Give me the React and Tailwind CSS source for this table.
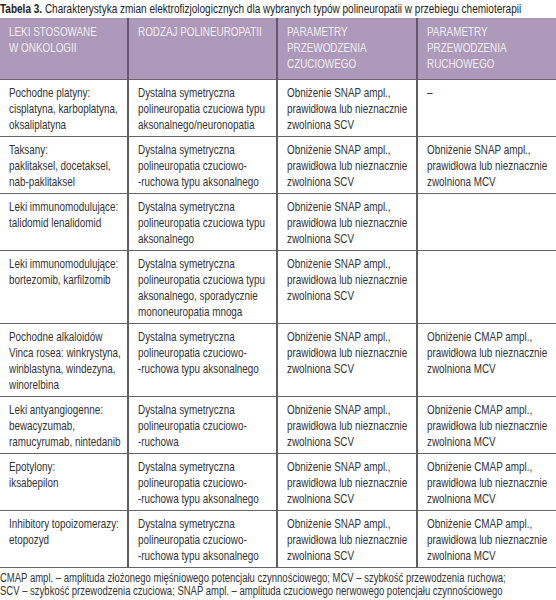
import React from "react";

const SNAP = ["Obniżenie SNAP ampl.,", "prawidłowa lub nieznacznie", "zwolniona SCV"];
const CMAP = ["Obniżenie CMAP ampl.,", "prawidłowa lub nieznacznie", "zwolniona MCV"];
const MCV = ["Obniżenie SNAP ampl.,", "prawidłowa lub nieznacznie", "zwolniona MCV"];
const CR_AKS = ["Dystalna symetryczna", "polineuropatia czuciowo-", "-ruchowa typu aksonalnego"];

const headers = [
  ["LEKI STOSOWANE", "W ONKOLOGII"],
  ["RODZAJ POLINEUROPATII"],
  ["PARAMETRY", "PRZEWODZENIA", "CZUCIOWEGO"],
  ["PARAMETRY", "PRZEWODZENIA", "RUCHOWEGO"],
];

const rows = [
  [
    ["Pochodne platyny:", "cisplatyna, karboplatyna,", "oksaliplatyna"],
    ["Dystalna symetryczna", "polineuropatia czuciowa typu", "aksonalnego/neuronopatia"],
    SNAP,
    ["–"],
  ],
  [["Taksany:", "paklitaksel, docetaksel,", "nab-paklitaksel"], CR_AKS, SNAP, MCV],
  [
    ["Leki immunomodulujące:", "talidomid lenalidomid"],
    ["Dystalna symetryczna", "polineuropatia czuciowa typu", "aksonalnego"],
    SNAP,
    [],
  ],
  [
    ["Leki immunomodulujące:", "bortezomib, karfilzomib"],
    ["Dystalna symetryczna", "polineuropatia czuciowa typu", "aksonalnego, sporadycznie", "mononeuropatia mnoga"],
    SNAP,
    [],
  ],
  [
    ["Pochodne alkaloidów", "Vinca rosea: winkrystyna,", "winblastyna, windezyna,", "winorelbina"],
    CR_AKS,
    SNAP,
    CMAP,
  ],
  [
    ["Leki antyangiogenne:", "bewacyzumab,", "ramucyrumab, nintedanib"],
    ["Dystalna symetryczna", "polineuropatia czuciowo-", "-ruchowa"],
    SNAP,
    CMAP,
  ],
  [["Epotylony:", "iksabepilon"], CR_AKS, SNAP, CMAP],
  [["Inhibitory topoizomerazy:", "etopozyd"], CR_AKS, SNAP, CMAP],
];

// narrow look: Liberation Sans squeezed horizontally
function Lines({ lines }) {
  return lines.map((l, i) => (
    <div key={i} className="whitespace-nowrap origin-left scale-x-[0.76]">
      {l}
    </div>
  ));
}

export default function App() {
  return (
    <div className="w-[556px] h-[600px] bg-white text-[#333] overflow-hidden font-['Liberation_Sans',Arial,sans-serif]">
      <div className="h-[18px] text-[13px] leading-[17px] text-[#222] whitespace-nowrap origin-left scale-x-[0.77]">
        <span className="font-bold">Tabela 3.</span> Charakterystyka zmian elektrofizjologicznych dla wybranych typów
        polineuropatii w przebiegu chemioterapii
      </div>

      <table className="table-fixed border-collapse w-[556px] text-[13px] leading-[16px]">
        <colgroup>
          <col className="w-[128px]" />
          <col className="w-[149px]" />
          <col className="w-[140px]" />
          <col className="w-[139px]" />
        </colgroup>
        <thead>
          <tr className="bg-[#ad99b9] border-b border-[#6f6074]">
            {headers.map((h, i) => (
              <th
                key={i}
                className={
                  "align-top text-left font-normal text-[#f2edf4] px-[9px] pt-[6px] pb-[7px] h-[61px] " +
                  (i < 3 ? "border-r-2 border-[#66586c]" : "")
                }
              >
                <Lines lines={h} />
              </th>
            ))}
          </tr>
        </thead>
        <tbody>
          {rows.map((r, ri) => (
            <tr key={ri} className="border-b border-[#666]">
              {r.map((c, ci) => (
                <td
                  key={ci}
                  className={
                    "align-top px-[9px] pt-[5px] pb-[3px] " + (ci < 3 ? "border-r-2 border-[#5e5e5e]" : "")
                  }
                >
                  <Lines lines={c} />
                </td>
              ))}
            </tr>
          ))}
        </tbody>
      </table>

      <div className="mt-[4px] text-[12.5px] leading-[13px] text-[#333] whitespace-nowrap origin-left scale-x-[0.76]">
        <div>
          CMAP ampl. – amplituda złożonego mięśniowego potencjału czynnościowego; MCV – szybkość przewodzenia ruchowa;
        </div>
        <div>
          SCV – szybkość przewodzenia czuciowa; SNAP ampl. – amplituda czuciowego nerwowego potencjału czynnościowego
        </div>
      </div>
    </div>
  );
}
